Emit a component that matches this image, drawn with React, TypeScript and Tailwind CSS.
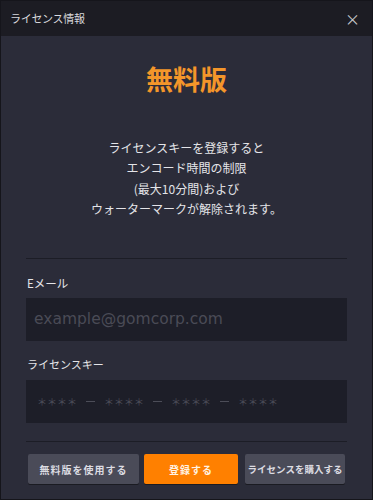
const font = { fontFamily: '"Noto Sans CJK JP", "Noto Sans", sans-serif' };

function KeyGroup() {
  return <span className="w-[42px] shrink-0 whitespace-nowrap text-center">＊＊＊＊</span>;
}

function Dash() {
  return <span className="h-px w-[9px] shrink-0 bg-[#4c4d58]" />;
}

export default function App() {
  return (
    <div
      className="flex h-[500px] w-[373px] flex-col overflow-hidden border border-[#15151b] bg-[#2b2c39] text-[#e6e6ea]"
      style={font}
    >
      <div className="flex h-[35px] shrink-0 items-center justify-between bg-[#1c1c23] pl-[9px] pr-[12px]">
        <span className="text-[11px] tracking-[-0.3px] text-[#d8d8dc]">ライセンス情報</span>
        <span className="text-[15px] leading-none text-[#c8c8cc]">×</span>
      </div>

      <div className="flex flex-1 flex-col px-[25px]">
        <h1 className="mt-[27px] text-center text-[27px] font-bold leading-[32px] text-[#f4962a]">
          無料版
        </h1>

        <p className="mt-[43px] text-center text-[12px] leading-[20.3px] text-[#e4e4e8]">
          ライセンスキーを登録すると
          <br />
          エンコード時間の制限
          <br />
          (最大10分間)および
          <br />
          ウォーターマークが解除されます。
        </p>

        <div className="mt-[39px] h-px bg-[#1c1d26]" />

        <label className="mt-[14px] pl-[1px] text-[11.5px] leading-[20px] text-[#e4e4e8]">Eメール</label>
        <div
          className="mt-[5px] flex h-[43px] items-center bg-[#1d1e28] px-[8px] text-[15.5px] text-[#4a4b56]"
          style={{ fontFamily: '"DejaVu Sans", sans-serif' }}
        >
          example@gomcorp.com
        </div>

        <label className="mt-[13px] pl-[1px] text-[11px] leading-[20px] text-[#e4e4e8]">ライセンスキー</label>
        <div className="mt-[6px] flex h-[43px] items-center gap-[8px] bg-[#1d1e28] px-[10px] text-[10px] text-[#4c4d58]">
          <KeyGroup />
          <Dash />
          <KeyGroup />
          <Dash />
          <KeyGroup />
          <Dash />
          <KeyGroup />
        </div>

        <div className="mt-[18px] h-px bg-[#1c1d26]" />

        <div className="mt-[12px] flex gap-[5px] px-[2px]">
          <button className="h-[30px] w-[112px] whitespace-nowrap rounded-[2px] bg-[#4a4b58] text-[10px] font-bold tracking-[1px] text-[#dcdce2] shadow-[0_1px_0_#1a1b22]">
            無料版を使用する
          </button>
          <button className="h-[30px] w-[95px] whitespace-nowrap rounded-[2px] bg-[#ff8000] text-[10px] font-bold tracking-[1px] text-[#fff3e4] shadow-[0_1px_0_#1a1b22]">
            登録する
          </button>
          <button className="ml-[2px] h-[30px] w-[101px] whitespace-nowrap rounded-[2px] bg-[#4a4b58] text-[9.5px] font-bold text-[#dcdce2] shadow-[0_1px_0_#1a1b22]">
            ライセンスを購入する
          </button>
        </div>
      </div>
    </div>
  );
}
